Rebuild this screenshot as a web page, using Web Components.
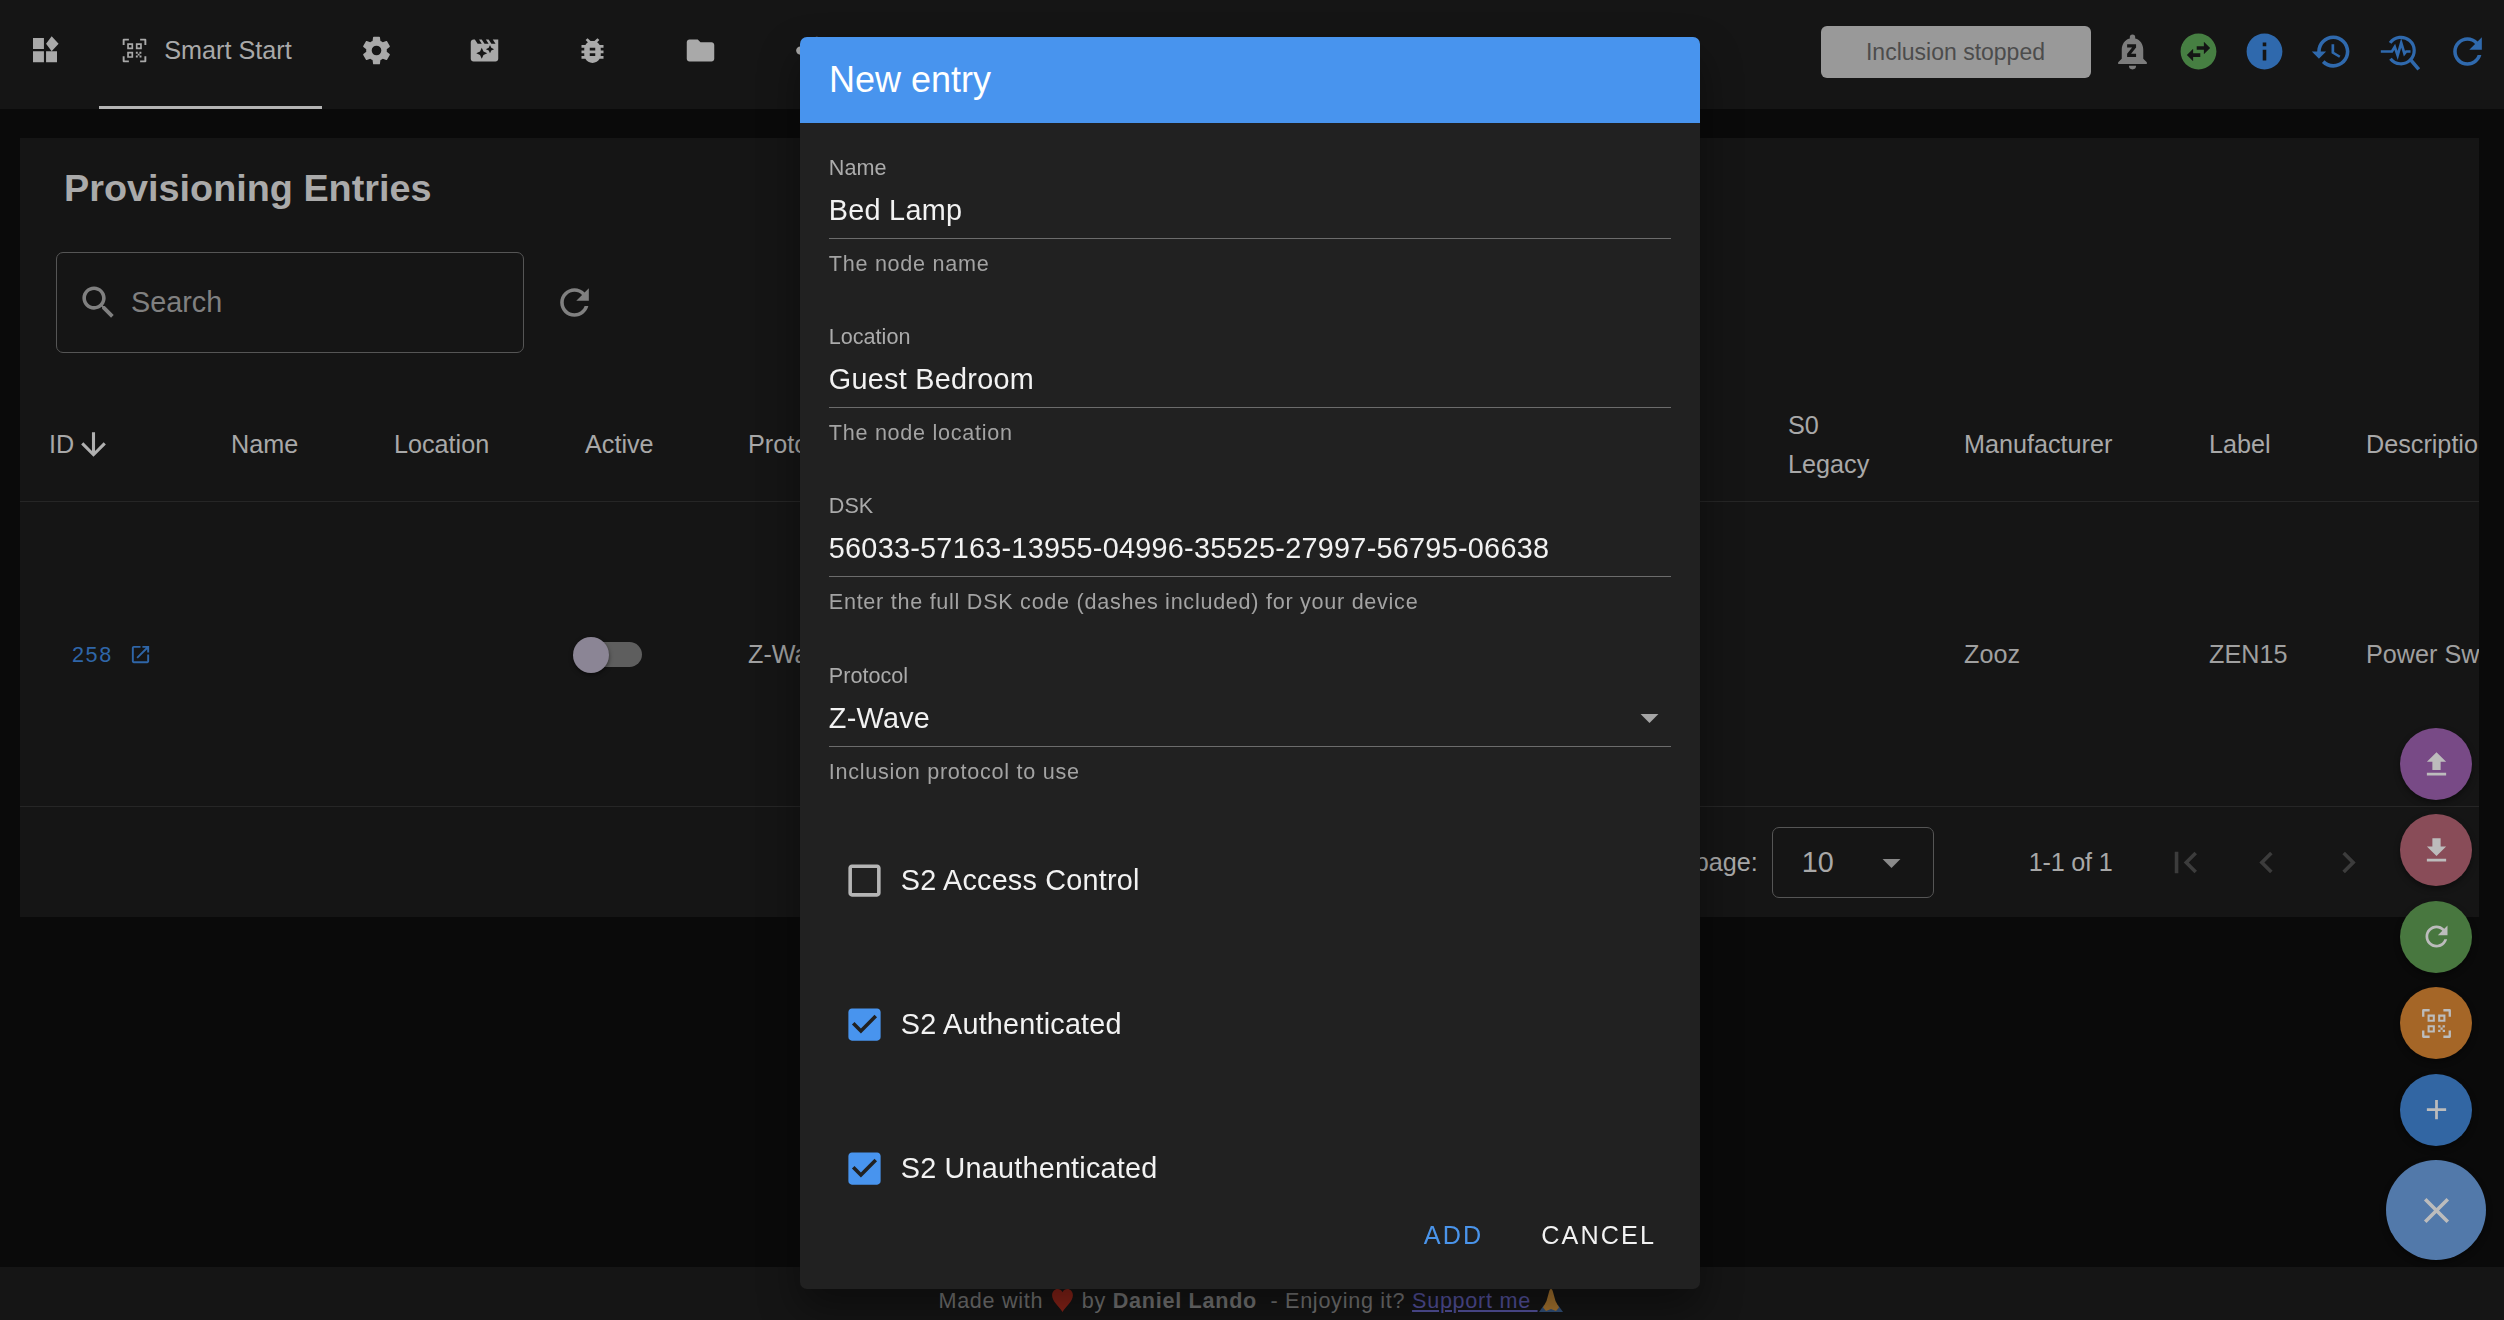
<!DOCTYPE html>
<html>
<head>
<meta charset="utf-8">
<title>Smart Start</title>
<style>
  html, body { margin: 0; height: 100%; background: #0a0a0a; overflow: hidden; }
  body { font-family: "Liberation Sans", Arial, sans-serif; color: #a8a8a8; }
</style>
</head>
<body>
<app-shell>
  <app-bar slot="bar"></app-bar>
  <provisioning-card slot="main"></provisioning-card>
  <app-footer slot="footer"></app-footer>
</app-shell>
<fab-stack></fab-stack>
<entry-dialog heading="New entry">
  <form-field label="Name" hint="The node name">Bed Lamp</form-field>
  <form-field label="Location" hint="The node location">Guest Bedroom</form-field>
  <form-field label="DSK" hint="Enter the full DSK code (dashes included) for your device">56033-57163-13955-04996-35525-27997-56795-06638</form-field>
  <form-field label="Protocol" hint="Inclusion protocol to use" select>Z-Wave</form-field>
  <check-field>S2 Access Control</check-field>
  <check-field checked>S2 Authenticated</check-field>
  <check-field checked>S2 Unauthenticated</check-field>
</entry-dialog>

<script>
const ICONS = {
  widgets: '<path d="M3 3h8.2v8.2H3zM12.8 13h8.2v8.2h-8.2zM3 13h8.2v8.2H3zM17 1.600l5.200 5.700-5.200 5.700-4.200-5.700z"/>',
  qr: '<path d="M1.5 7V2.5a1 1 0 0 1 1-1H7v1.7H3.2V7zM22.5 7V2.5a1 1 0 0 0-1-1H17v1.7h3.8V7zM1.5 17v4.5a1 1 0 0 0 1 1H7v-1.7H3.2V17zM22.5 17v4.5a1 1 0 0 1-1 1H17v-1.7h3.8V17z"/><path fill-rule="evenodd" d="M5.5 5.5h5.3v5.3H5.5zM7 7v2.3h2.3V7zM13.2 5.5h5.3v5.3h-5.3zM14.7 7v2.3H17V7zM5.5 13.2h5.3v5.3H5.5zM7 14.7V17h2.3v-2.3z"/><path d="M13.2 13.2h1.7v1.7h-1.7zM16.4 13.2h1.7v1.7h-1.7zM14.9 14.9h1.6v1.6h-1.6zM13.2 16.5h1.7v1.7h-1.7zM16.5 16.5h1.7v1.7h-1.7z"/>',
  cog: '<path d="M12,15.5A3.5,3.5 0 0,1 8.5,12A3.5,3.5 0 0,1 12,8.5A3.5,3.5 0 0,1 15.5,12A3.5,3.5 0 0,1 12,15.5M19.43,12.97C19.47,12.65 19.5,12.33 19.5,12C19.5,11.67 19.47,11.34 19.43,11L21.54,9.37C21.73,9.22 21.78,8.95 21.66,8.73L19.66,5.27C19.54,5.05 19.27,4.96 19.05,5.05L16.56,6.05C16.04,5.66 15.5,5.32 14.87,5.07L14.5,2.42C14.46,2.18 14.25,2 14,2H10C9.75,2 9.54,2.18 9.5,2.42L9.13,5.07C8.5,5.32 7.96,5.66 7.44,6.05L4.95,5.05C4.73,4.96 4.46,5.05 4.34,5.27L2.34,8.73C2.21,8.95 2.27,9.22 2.46,9.37L4.57,11C4.53,11.34 4.5,11.67 4.5,12C4.5,12.33 4.53,12.65 4.57,12.97L2.46,14.63C2.27,14.78 2.21,15.05 2.34,15.27L4.34,18.73C4.46,18.95 4.73,19.03 4.95,18.95L7.44,17.94C7.96,18.34 8.5,18.68 9.13,18.93L9.5,21.58C9.54,21.82 9.75,22 10,22H14C14.25,22 14.46,21.82 14.5,21.58L14.87,18.93C15.5,18.67 16.04,18.34 16.56,17.94L19.05,18.95C19.27,19.03 19.54,18.95 19.66,18.73L21.66,15.27C21.78,15.05 21.73,14.78 21.54,14.63L19.43,12.97Z"/>',
  movie: '<path d="M18 4l2 3h-3l-2-3h-2l2 3h-3l-2-3H8l2 3H7L5 4H4c-1.1 0-1.99.9-1.99 2L2 18c0 1.1.9 2 2 2h16c1.1 0 2-.9 2-2V4h-4zm-6.75 11.25L10 18l-1.25-2.75L6 14l2.75-1.25L10 10l1.25 2.75L14 14l-2.75 1.25zm5.69-3.31L16 14l-.94-2.06L13 11l2.06-.94L16 8l.94 2.06L19 11l-2.06.94z"/>',
  bug: '<path d="M20 8h-2.81c-.45-.78-1.07-1.45-1.82-1.96L17 4.41 15.59 3l-2.17 2.17C12.96 5.06 12.49 5 12 5c-.49 0-.96.06-1.41.17L8.41 3 7 4.41l1.62 1.63C7.88 6.55 7.26 7.22 6.81 8H4v2h2.09c-.05.33-.09.66-.09 1v1H4v2h2v1c0 .34.04.67.09 1H4v2h2.81c1.04 1.79 2.97 3 5.19 3s4.15-1.21 5.19-3H20v-2h-2.09c.05-.33.09-.66.09-1v-1h2v-2h-2v-1c0-.34-.04-.67-.09-1H20V8zm-6 8h-4v-2h4v2zm0-4h-4v-2h4v2z"/>',
  folder: '<path d="M10 4H4c-1.1 0-1.99.9-1.99 2L2 18c0 1.1.9 2 2 2h16c1.1 0 2-.9 2-2V8c0-1.1-.9-2-2-2h-8l-2-2z"/>',
  share: '<path d="M18 16.08c-.76 0-1.44.3-1.96.77L8.91 12.7c.05-.23.09-.46.09-.7s-.04-.47-.09-.7l7.05-4.11c.54.5 1.25.81 2.04.81 1.66 0 3-1.34 3-3s-1.34-3-3-3-3 1.34-3 3c0 .24.04.47.09.7L8.04 9.81C7.5 9.31 6.79 9 6 9c-1.66 0-3 1.34-3 3s1.34 3 3 3c.79 0 1.5-.31 2.04-.81l7.12 4.16c-.05.21-.08.43-.08.65 0 1.61 1.31 2.92 2.92 2.92 1.61 0 2.92-1.31 2.92-2.92s-1.31-2.92-2.92-2.92z"/>',
  bell: '<path d="M14,9.8L11.2,13.2H14V15H9V13.2L11.8,9.8H9V8H14M18,16V11C18,7.93 16.36,5.36 13.5,4.68V4A1.5,1.5 0 0,0 12,2.5A1.5,1.5 0 0,0 10.5,4V4.68C7.63,5.36 6,7.92 6,11V16L4,18V19H20V18M12,22A2,2 0 0,0 14,20H10A2,2 0 0,0 12,22Z"/>',
  swap: '<path fill-rule="evenodd" d="M22 12c0-5.52-4.48-10-10-10S2 6.48 2 12s4.48 10 10 10 10-4.48 10-10zm-7-5.5l3.5 3.5-3.5 3.5V11h-4V9h4V6.5zm-6 11L5.5 14 9 10.5V13h4v2H9v2.5z"/>',
  info: '<path d="M12 2C6.48 2 2 6.48 2 12s4.48 10 10 10 10-4.48 10-10S17.52 2 12 2zm1 15h-2v-6h2v6zm0-8h-2V7h2v2z"/>',
  history: '<path d="M13 3c-4.97 0-9 4.03-9 9H1l3.89 3.89.07.14L9 12H6c0-3.87 3.13-7 7-7s7 3.13 7 7-3.13 7-7 7c-1.93 0-3.68-.79-4.94-2.06l-1.42 1.42C8.27 19.99 10.51 21 13 21c4.97 0 9-4.03 9-9s-4.03-9-9-9zm-1 5v5l4.28 2.54.72-1.21-3.5-2.08V8H12z"/>',
  pulse: '<g fill="none" stroke="currentColor" stroke-width="1.8"><path d="M6.2 7.2A7.4 7.4 0 1 1 6.4 16"/><path d="M17.8 16.8l4.4 5.2" stroke-width="2"/><path d="M1 12h6.2l1.6-2.6 1.6 4.8 2-7 1.8 6 1-1.2h2.4" stroke-width="1.5"/></g>',
  refresh: '<path d="M17.65 6.35C16.2 4.9 14.21 4 12 4c-4.42 0-7.99 3.58-7.99 8s3.57 8 7.99 8c3.73 0 6.84-2.55 7.73-6h-2.08c-.82 2.33-3.04 4-5.65 4-3.31 0-6-2.69-6-6s2.69-6 6-6c1.66 0 3.14.69 4.22 1.78L13 11h7V4l-2.35 2.35z"/>',
  search: '<path d="M15.5 14h-.79l-.28-.27C15.41 12.59 16 11.11 16 9.5 16 5.91 13.09 3 9.5 3S3 5.91 3 9.5 5.91 16 9.5 16c1.61 0 3.09-.59 4.23-1.57l.27.28v.79l5 4.99L20.49 19l-4.99-5zm-6 0C7.01 14 5 11.99 5 9.5S7.01 5 9.5 5 14 7.01 14 9.5 11.99 14 9.5 14z"/>',
  down: '<path d="M20 12l-1.41-1.41L13 16.17V4h-2v12.17l-5.58-5.59L4 12l8 8 8-8z"/>',
  open: '<path d="M19 19H5V5h7V3H5c-1.11 0-2 .9-2 2v14c0 1.1.89 2 2 2h14c1.1 0 2-.9 2-2v-7h-2v7zM14 3v2h3.59l-9.83 9.83 1.41 1.41L19 6.41V10h2V3h-7z"/>',
  upload: '<path d="M9 16h6v-6h4l-7-7-7 7h4zm-4 2h14v2H5z"/>',
  download: '<path d="M19 9h-4V3H9v6H5l7 7 7-7zM5 18v2h14v-2H5z"/>',
  add: '<path d="M19 13h-6v6h-2v-6H5v-2h6V5h2v6h6v2z"/>',
  close: '<path d="M19 6.41L17.59 5 12 10.59 6.41 5 5 6.41 10.59 12 5 17.59 6.41 19 12 13.41 17.59 19 19 17.59 13.41 12z"/>',
  first: '<path d="M18.41 16.59L13.82 12l4.59-4.59L17 6l-6 6 6 6zM6 6h2v12H6z"/>',
  prev: '<path d="M15.41 7.41L14 6l-6 6 6 6 1.41-1.41L10.83 12z"/>',
  next: '<path d="M10 6L8.59 7.41 13.17 12l-4.58 4.59L10 18l6-6z"/>',
  drop: '<path d="M7 10l5 5 5-5z"/>',
  boxOff: '<path d="M19 5v14H5V5h14m0-2H5c-1.1 0-2 .9-2 2v14c0 1.1.9 2 2 2h14c1.1 0 2-.9 2-2V5c0-1.1-.9-2-2-2z"/>',
  boxOn: '<path d="M19 3H5c-1.11 0-2 .9-2 2v14c0 1.1.89 2 2 2h14c1.11 0 2-.89 2-2V5c0-1.11-.89-2-2-2z"/><path fill="#212121" d="M10 17l-5-5 1.41-1.41L10 14.17l7.59-7.59L19 8z"/>'
};

class UiIcon extends HTMLElement {
  connectedCallback() {
    const size = this.getAttribute('size') || 43;
    this.attachShadow({ mode: 'open' }).innerHTML = `
      <style>
        :host { display: inline-flex; flex: none; width: ${size}px; height: ${size}px; }
        svg { width: 100%; height: 100%; fill: currentColor; display: block; }
      </style>
      <svg viewBox="0 0 24 24">${ICONS[this.getAttribute('name')]}</svg>`;
  }
}

class AppShell extends HTMLElement {
  constructor() {
    super();
    this.attachShadow({ mode: 'open' }).innerHTML = `
      <style>
        :host { display: flex; flex-direction: column; height: 1320px; }
        .main { flex: 1; padding: 29px 25px 0 20px; min-height: 0; }
      </style>
      <slot name="bar"></slot>
      <div class="main"><slot name="main"></slot></div>
      <slot name="footer"></slot>`;
  }
}

class NavTab extends HTMLElement {
  constructor() {
    super();
    this.attachShadow({ mode: 'open' }).innerHTML = `
      <style>
        :host { display: flex; align-items: center; justify-content: center; gap: 16px; width: 108px; height: 100px; font-size: 25.2px; color: #a9a9a9; flex: none; }
        :host([active]) { width: 215px; padding: 0 8px 6px 0; border-bottom: 3px solid #b4b4b4; }
      </style>
      <slot></slot>`;
  }
}

class AppBar extends HTMLElement {
  constructor() {
    super();
    this.attachShadow({ mode: 'open' }).innerHTML = `
      <style>
        :host { display: flex; align-items: flex-start; height: 109px; background: #151515; flex: none; }
        .tabs { display: flex; margin-left: -9px; flex: 1; }
        .status { display: flex; align-items: center; justify-content: center; width: 270px; height: 52px; margin-top: 26px; background: #999; border-radius: 6px; color: #4c4c4c; font-size: 23px; }
        .tools { display: flex; margin-top: 30px; padding-right: 15px; margin-left: 20px; color: #2f69ad; }
        .tools ui-icon { margin-left: 24.5px; }
        .tools ui-icon:first-child { margin-left: 0; color: #7c7c7c; }
        .tools .green { color: #467f42; margin-left: 23px; }
        .tools .info { margin-left: 23px; }
        .tools .pulse { margin-left: 26px; }
        .tools .last { margin-left: 24px; }
      </style>
      <div class="tabs">
        <nav-tab><ui-icon name="widgets" size="32"></ui-icon></nav-tab>
        <nav-tab active><ui-icon name="qr" size="27"></ui-icon>Smart Start</nav-tab>
        <nav-tab><ui-icon name="cog" size="33"></ui-icon></nav-tab>
        <nav-tab><ui-icon name="movie" size="33"></ui-icon></nav-tab>
        <nav-tab><ui-icon name="bug" size="33"></ui-icon></nav-tab>
        <nav-tab><ui-icon name="folder" size="33"></ui-icon></nav-tab>
        <nav-tab><ui-icon name="share" size="33"></ui-icon></nav-tab>
      </div>
      <div class="status">Inclusion stopped</div>
      <div class="tools">
        <ui-icon name="bell"></ui-icon>
        <ui-icon class="green" name="swap"></ui-icon>
        <ui-icon class="info" name="info"></ui-icon>
        <ui-icon name="history"></ui-icon>
        <ui-icon class="pulse" name="pulse"></ui-icon>
        <ui-icon class="last" name="refresh"></ui-icon>
      </div>`;
  }
}

class ToggleSwitch extends HTMLElement {
  constructor() {
    super();
    this.attachShadow({ mode: 'open' }).innerHTML = `
      <style>
        :host { display: block; position: relative; width: 69px; height: 36px; }
        .track { position: absolute; left: 4px; right: 0; top: 5px; height: 25px; border-radius: 13px; background: #5e5e5e; }
        .thumb { position: absolute; left: 0; top: 0; width: 36px; height: 36px; border-radius: 50%; background: #8b8595; box-shadow: 0 2px 4px rgba(0,0,0,.5); }
      </style>
      <div class="track"></div><div class="thumb"></div>`;
  }
}

class ProvisioningCard extends HTMLElement {
  constructor() {
    super();
    // the rest of the columns between Protocol and S0 Legacy sit behind the dialog
    const cols = '182px 163px 191px 163px 1040px 176px 245px 157px 200px';
    this.attachShadow({ mode: 'open' }).innerHTML = `
      <style>
        :host { display: block; background: #151515; height: 779px; overflow: hidden; color: #a8a8a8; font-size: 25.2px; }
        h1 { margin: 0; height: 100px; display: flex; align-items: center; padding-left: 44px; font-size: 37.8px; font-weight: 700; color: #aaa; }
        .search-row { display: flex; align-items: center; margin: 14px 0 0 36px; height: 101px; }
        .search { display: flex; align-items: center; width: 468px; height: 100%; box-sizing: border-box; border: 1.5px solid #555; border-radius: 7px; padding-left: 20px; gap: 11px; color: #808080; font-size: 28.8px; }
        .search-row > ui-icon { margin-left: 29px; color: #808080; }
        .row { display: grid; grid-template-columns: ${cols}; border-bottom: 1.5px solid #262626; align-items: center; white-space: nowrap; }
        .head { height: 114px; margin-top: 35px; box-sizing: border-box; line-height: 39px; }
        .body { height: 305px; box-sizing: border-box; color: #a0a0a0; padding-top: 1px; }
        .row > div { padding-left: 29px; }
        .id { display: flex; align-items: center; }
        .id ui-icon { color: #b0b0b0; margin-left: 1px; }
        .row > .link { display: flex; align-items: center; color: #2f66a8; font-size: 21.6px; letter-spacing: 1.6px; padding-left: 52px; gap: 16px; }
        .row > .toggle { padding-left: 17px; }
        .row > .wrap { white-space: normal; width: 100px; }
        .foot { display: flex; align-items: center; justify-content: flex-end; height: 110px; padding-right: 90px; }
        .select { display: flex; align-items: center; justify-content: space-between; box-sizing: border-box; width: 162px; height: 71px; margin: 0 95px 0 14px; padding: 0 20px 0 29px; border: 1.5px solid #555; border-radius: 7px; font-size: 28.8px; }
        .select ui-icon { color: #8a8a8a; }
        .range { letter-spacing: -.2px; }
        .pages { display: flex; margin-left: 32px; color: #3c3c3c; }
        .pages span { display: flex; justify-content: center; width: 81.5px; }
      </style>
      <h1>Provisioning Entries</h1>
      <div class="search-row">
        <div class="search"><ui-icon name="search"></ui-icon>Search</div>
        <ui-icon name="refresh"></ui-icon>
      </div>
      <div class="row head">
        <div class="id">ID<ui-icon name="down" size="37"></ui-icon></div>
        <div>Name</div><div>Location</div><div>Active</div><div>Protocol</div>
        <div class="wrap">S0 Legacy</div>
        <div>Manufacturer</div><div>Label</div><div>Description</div>
      </div>
      <div class="row body">
        <div class="link">258<ui-icon name="open" size="23"></ui-icon></div>
        <div></div><div></div>
        <div class="toggle"><toggle-switch></toggle-switch></div>
        <div>Z-Wave</div>
        <div></div>
        <div>Zooz</div><div>ZEN15</div><div>Power Switch</div>
      </div>
      <div class="foot">
        <span>Rows per page:</span>
        <div class="select">10<ui-icon name="drop"></ui-icon></div>
        <span class="range">1-1 of 1</span>
        <div class="pages">
          <span><ui-icon name="first"></ui-icon></span>
          <span><ui-icon name="prev"></ui-icon></span>
          <span><ui-icon name="next"></ui-icon></span>
        </div>
      </div>`;
  }
}

class AppFooter extends HTMLElement {
  constructor() {
    super();
    this.attachShadow({ mode: 'open' }).innerHTML = `
      <style>
        :host { display: flex; justify-content: center; box-sizing: border-box; height: 53px; padding-top: 20px; background: #151515; color: #757575; font-size: 21.6px; letter-spacing: .72px; line-height: 27px; white-space: pre; flex: none; }
        .line { display: flex; align-items: center; height: 27px; margin-left: -2px; }
        a { color: #5653a0; text-decoration: underline; display: inline-flex; align-items: center; }
        svg { display: block; }
      </style>
      <div class="line">Made with <svg width="25" height="25" viewBox="0 0 22 24"><path fill="#8a2318" d="M11 23C8 18 1 13 1 7c0-3.500 2.500-6 5.300-6C8.300 1 10 2.200 11 4c1-1.800 2.700-3 4.700-3C18.500 1 21 3.500 21 7c0 6-7 11-10 16z"/></svg> by <b>Daniel Lando</b>  - Enjoying it? <a href="#">Support me <svg width="26" height="26" viewBox="0 0 26 26"><path fill="#33527c" d="M1 24l5-7h14l5 7z"/><path fill="#a8752f" d="M13 1c1 0 1.500 1 2 3l2.500 9 3.500 6.500-3 3.500-5-2-5 2-3-3.500L8.500 13 11 4c.500-2 1-3 2-3z"/></svg></a></div>`;
  }
}

class FabButton extends HTMLElement {
  connectedCallback() {
    const big = this.hasAttribute('big');
    const d = big ? 100 : 72;
    this.attachShadow({ mode: 'open' }).innerHTML = `
      <style>
        :host { display: flex; align-items: center; justify-content: center; width: ${d}px; height: ${d}px; border-radius: 50%; background: ${this.getAttribute('color')}; color: #bcbcbc; box-shadow: 0 3px 6px rgba(0,0,0,.4); }
      </style>
      <ui-icon name="${this.getAttribute('icon')}" size="${big ? 43 : 33}"></ui-icon>`;
  }
}

class FabStack extends HTMLElement {
  constructor() {
    super();
    this.attachShadow({ mode: 'open' }).innerHTML = `
      <style>
        :host { position: fixed; right: 18px; bottom: 60px; display: flex; flex-direction: column; align-items: center; gap: 14.4px; width: 100px; }
      </style>
      <fab-button color="#784a86" icon="upload"></fab-button>
      <fab-button color="#894c58" icon="download"></fab-button>
      <fab-button color="#48773f" icon="refresh"></fab-button>
      <fab-button color="#a56627" icon="qr"></fab-button>
      <fab-button color="#3266a3" icon="add"></fab-button>
      <fab-button color="#5279aa" icon="close" big></fab-button>`;
  }
}

class FormField extends HTMLElement {
  connectedCallback() {
    const arrow = this.hasAttribute('select') ? '<ui-icon name="drop"></ui-icon>' : '';
    this.attachShadow({ mode: 'open' }).innerHTML = `
      <style>
        :host { display: block; height: 169.2px; }
        .label { height: 30px; line-height: 30px; font-size: 21.6px; color: #ababab; }
        .value { display: flex; align-items: center; justify-content: space-between; box-sizing: border-box; height: 56px; padding-bottom: 1px; line-height: 54px; font-size: 28.8px; letter-spacing: .27px; color: #f2f2f2; border-bottom: 1.5px solid #6c6c6c; }
        .value ui-icon { color: #a5a5a5; }
        .hint { margin-top: 10px; height: 30px; line-height: 30px; font-size: 21.6px; letter-spacing: .72px; color: #a3a3a3; }
      </style>
      <div class="label">${this.getAttribute('label')}</div>
      <div class="value"><span><slot></slot></span>${arrow}</div>
      <div class="hint">${this.getAttribute('hint')}</div>`;
  }
}

class CheckField extends HTMLElement {
  connectedCallback() {
    const on = this.hasAttribute('checked');
    this.attachShadow({ mode: 'open' }).innerHTML = `
      <style>
        :host { display: flex; align-items: center; height: 72px; margin-bottom: 72px; padding-left: 14px; gap: 15px; font-size: 28.8px; letter-spacing: .2px; color: #f2f2f2; }
        ui-icon { color: ${on ? '#4894ee' : '#b5b5b5'}; }
      </style>
      <ui-icon name="${on ? 'boxOn' : 'boxOff'}"></ui-icon><slot></slot>`;
  }
}

class EntryDialog extends HTMLElement {
  constructor() {
    super();
    this.attachShadow({ mode: 'open' }).innerHTML = `
      <style>
        :host { position: fixed; left: 800px; top: 37px; width: 900px; height: 1252px; display: flex; flex-direction: column; background: #212121; border-radius: 7px; overflow: hidden; box-shadow: 0 20px 40px rgba(0,0,0,.4); }
        header { flex: none; display: flex; align-items: center; height: 86px; padding-left: 29px; background: #4894ee; color: #fff; font-size: 36px; }
        .body { flex: 1; min-height: 0; overflow: hidden; padding: 30px 28.8px 0; }
        .checks { margin-top: 15.2px; }
        footer { flex: none; display: flex; justify-content: flex-end; gap: 58px; height: 86px; padding: 17px 44px 0 0; box-sizing: border-box; font-size: 25.2px; letter-spacing: 2.1px; line-height: 30px; color: #f2f2f2; }
        .add { color: #4a94ea; }
      </style>
      <header></header>
      <div class="body"><slot name="fields"></slot><div class="checks"><slot></slot></div></div>
      <footer><span class="add">ADD</span><span>CANCEL</span></footer>`;
  }
  connectedCallback() {
    this.shadowRoot.querySelector('header').textContent = this.getAttribute('heading');
    this.querySelectorAll('form-field').forEach(f => f.slot = 'fields');
  }
}

customElements.define('ui-icon', UiIcon);
customElements.define('app-shell', AppShell);
customElements.define('nav-tab', NavTab);
customElements.define('app-bar', AppBar);
customElements.define('toggle-switch', ToggleSwitch);
customElements.define('provisioning-card', ProvisioningCard);
customElements.define('app-footer', AppFooter);
customElements.define('fab-button', FabButton);
customElements.define('fab-stack', FabStack);
customElements.define('form-field', FormField);
customElements.define('check-field', CheckField);
customElements.define('entry-dialog', EntryDialog);
</script>
</body>
</html>
